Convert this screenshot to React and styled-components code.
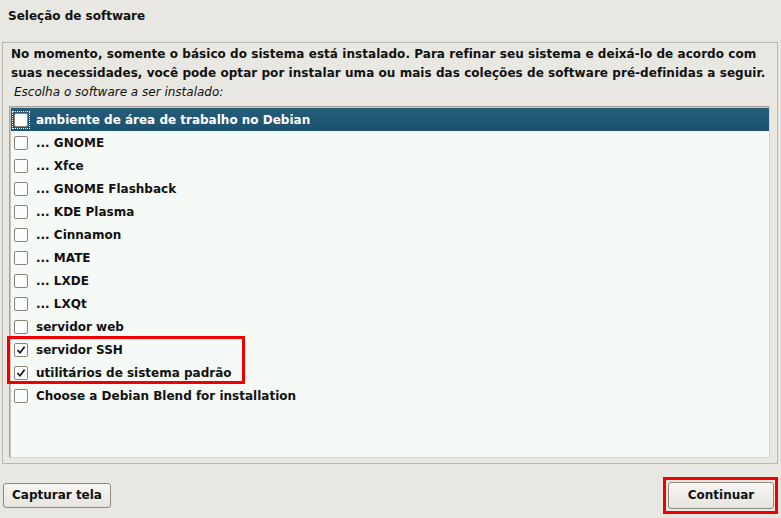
import React from "react";
import styled, { createGlobalStyle } from "styled-components";

const Global = createGlobalStyle`
  html, body { margin: 0; padding: 0; background: #e8e7e1; }
  body { font-family: "DejaVu Sans", "Liberation Sans", sans-serif; font-size: 12px; color: #111; }
`;

const Page = styled.div`
  width: 781px;
  height: 518px;
  display: flex;
  flex-direction: column;
  background: #e8e7e1;
  position: relative;
  overflow: hidden;
`;

const Title = styled.div`
  font-weight: bold;
  font-size: 12px;
  height: 42px;
  box-sizing: border-box;
  padding: 7px 0 0 8px;
  line-height: 18px;
`;

const Panel = styled.div`
  margin: 0 3px 0 2px;
  height: 422px;
  box-sizing: border-box;
  border: 1px solid #bbb8ae;
  display: flex;
  flex-direction: column;
  padding: 2px 7px 5px 6px;
`;

const Intro = styled.p`
  margin: 0 0 0 2px;
  font-weight: bold;
  font-size: 12px;
  letter-spacing: 0.05px;
  line-height: 19px;
  white-space: nowrap;
`;

const Prompt = styled.div`
  font-style: oblique;
  font-size: 12px;
  line-height: 18px;
  margin: 0 0 5px 5px;
`;

const List = styled.div`
  flex: 1;
  background: #f5faf7;
  border: 1px solid #a8a396;
  border-right-color: #d9d6cc;
  border-bottom-color: #d9d6cc;
  box-shadow: inset 1px 1px 0 #c8c4b9;
  display: flex;
  flex-direction: column;
  padding-top: 1px;
`;

const Row = styled.div`
  height: 23px;
  display: flex;
  align-items: center;
  padding-left: 4px;
  gap: 9px;
  font-weight: bold;
  font-size: 12px;
  background: ${p => (p.$selected ? "linear-gradient(#245c7a, #1c5371)" : "transparent")};
  color: ${p => (p.$selected ? "#ffffff" : "#111")};
  margin-left: 1px;
`;

const Focus = styled.span`
  display: inline-flex;
  padding: 2px;
  margin: -3px;
  outline: ${p => (p.$on ? "1px dotted #ffffff" : "none")};
  outline-offset: -1px;
`;

const Box = styled.span`
  width: 12px;
  height: 12px;
  border: 1px solid #8b8478;
  border-radius: 2px;
  background: #fbfdfc;
  display: inline-flex;
  align-items: center;
  justify-content: center;
`;

const Footer = styled.div`
  flex: 1;
  display: flex;
  align-items: center;
  justify-content: space-between;
  padding: 8px 7px 0 3px;
`;

const Button = styled.button`
  font-family: "DejaVu Sans", "Liberation Sans", sans-serif;
  font-weight: bold;
  font-size: 12px;
  color: #111;
  height: ${p => p.$h}px;
  width: ${p => p.$w}px;
  border: 1px solid #8e8a80;
  border-radius: 3px;
  background: linear-gradient(#f7f6f3, #e6e4de);
  padding: 0;
`;

const Highlight = styled.div`
  position: absolute;
  border: 3px solid #f00000;
  box-sizing: border-box;
  pointer-events: none;
`;

const Check = () => (
  <svg width="10" height="10" viewBox="0 0 10 10">
    <path d="M1.5 5.2 L4 7.8 L8.6 1.8" fill="none" stroke="#111" strokeWidth="1.7" />
  </svg>
);

const items = [
  ["ambiente de área de trabalho no Debian", false, true],
  ["... GNOME", false],
  ["... Xfce", false],
  ["... GNOME Flashback", false],
  ["... KDE Plasma", false],
  ["... Cinnamon", false],
  ["... MATE", false],
  ["... LXDE", false],
  ["... LXQt", false],
  ["servidor web", false],
  ["servidor SSH", true],
  ["utilitários de sistema padrão", true],
  ["Choose a Debian Blend for installation", false],
];

export default function App() {
  return (
    <Page>
      <Global />
      <Title>Seleção de software</Title>
      <Panel>
        <Intro>
          No momento, somente o básico do sistema está instalado. Para refinar seu sistema e deixá-lo de acordo com
          <br />
          suas necessidades, você pode optar por instalar uma ou mais das coleções de software pré-definidas a seguir.
        </Intro>
        <Prompt>Escolha o software a ser instalado:</Prompt>
        <List>
          {items.map(([label, checked, sel]) => (
            <Row key={label} $selected={sel}>
              <Focus $on={sel}>
                <Box>{checked && <Check />}</Box>
              </Focus>
              <span>{label}</span>
            </Row>
          ))}
        </List>
      </Panel>
      <Footer>
        <Button $w={108} $h={25}>Capturar tela</Button>
        <Button $w={106} $h={27}>Continuar</Button>
      </Footer>
      <Highlight style={{ left: 7, top: 336, width: 238, height: 48 }} />
      <Highlight style={{ left: 663, top: 477, width: 115, height: 37 }} />
    </Page>
  );
}
